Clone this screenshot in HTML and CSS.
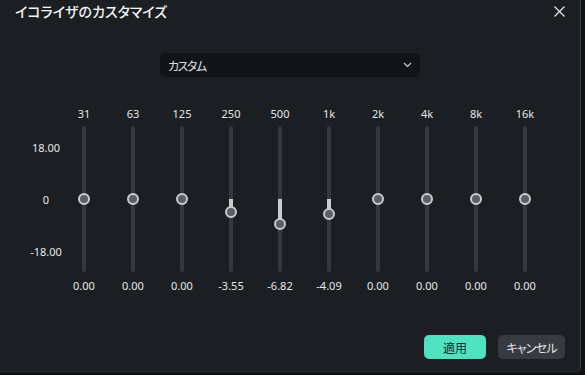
FILE: index.html
```html
<!DOCTYPE html>
<html lang="ja">
  <head>
    <meta charset="UTF-8">
    <meta name="viewport" content="width=device-width, initial-scale=1.0">
    <title>イコライザのカスタマイズ</title>
    <link rel="stylesheet" href="styles.css">
  </head>
  <body>
    <div class="dialog">
      <div class="header">
        <h1 class="title">イコライザのカスタマイズ</h1>
        <button class="close" aria-label="close">
          <svg width="11" height="11" viewBox="0 0 11 11">
            <path d="M0.5 0.5 L10.5 10.5 M10.5 0.5 L0.5 10.5" stroke="#e8eaec" stroke-width="1.2" fill="none"/>
          </svg>
        </button>
      </div>

      <div class="preset">
        <span>カスタム</span>
        <svg width="9" height="6" viewBox="0 0 9 6">
          <path d="M1 1 L4.5 4.5 L8 1" stroke="#c9ccd0" stroke-width="1.2" fill="none"/>
        </svg>
      </div>

      <div class="eq">
        <div class="axis">
          <div class="axis-labels">
            <span>18.00</span>
            <span>0</span>
            <span>-18.00</span>
          </div>
        </div>
        <div class="bands">
          <div class="band"><span class="freq">31</span><div class="track" style="--db:0"><div class="fill"></div><div class="knob"></div></div><span class="value">0.00</span></div>
          <div class="band"><span class="freq">63</span><div class="track" style="--db:0"><div class="fill"></div><div class="knob"></div></div><span class="value">0.00</span></div>
          <div class="band"><span class="freq">125</span><div class="track" style="--db:0"><div class="fill"></div><div class="knob"></div></div><span class="value">0.00</span></div>
          <div class="band"><span class="freq">250</span><div class="track" style="--db:-3.55"><div class="fill"></div><div class="knob"></div></div><span class="value">-3.55</span></div>
          <div class="band"><span class="freq">500</span><div class="track" style="--db:-6.82"><div class="fill"></div><div class="knob"></div></div><span class="value">-6.82</span></div>
          <div class="band"><span class="freq">1k</span><div class="track" style="--db:-4.09"><div class="fill"></div><div class="knob"></div></div><span class="value">-4.09</span></div>
          <div class="band"><span class="freq">2k</span><div class="track" style="--db:0"><div class="fill"></div><div class="knob"></div></div><span class="value">0.00</span></div>
          <div class="band"><span class="freq">4k</span><div class="track" style="--db:0"><div class="fill"></div><div class="knob"></div></div><span class="value">0.00</span></div>
          <div class="band"><span class="freq">8k</span><div class="track" style="--db:0"><div class="fill"></div><div class="knob"></div></div><span class="value">0.00</span></div>
          <div class="band"><span class="freq">16k</span><div class="track" style="--db:0"><div class="fill"></div><div class="knob"></div></div><span class="value">0.00</span></div>
        </div>
      </div>

      <div class="footer">
        <button class="btn apply">適用</button>
        <button class="btn cancel">キャンセル</button>
      </div>
    </div>
  </body>
</html>
```

FILE: styles.css
```css
*{
    margin: 0;
    padding: 0;
    box-sizing: border-box;
}

body{
    background: #0d0f11;
    font-family: "Noto Sans", "Noto Sans CJK JP", sans-serif;
    color: #e6e8ea;
}

.dialog{
    width: 581px;
    height: 373px;
    background: #1b1e22;
    border-right: 1px solid #3a3d42;
    border-bottom-right-radius: 6px;
    display: flex;
    flex-direction: column;
}

.header{
    height: 22px;
    display: flex;
    align-items: center;
    justify-content: space-between;
    padding: 0 15px 0 15px;
}

.title{
    font-family: "Noto Sans CJK JP", sans-serif;
    font-size: 14px;
    font-weight: 500;
    font-feature-settings: "palt";
    color: #f2f3f4;
}

.close{
    border: 0;
    background: none;
    width: 11px;
    height: 11px;
    display: flex;
}

.preset{
    width: 260px;
    height: 24px;
    margin: 31px auto 0;
    background: #121518;
    border-radius: 5px;
    display: flex;
    align-items: center;
    justify-content: space-between;
    padding: 0 8px 0 8px;
    font-family: "Noto Sans CJK JP", sans-serif;
    font-size: 12px;
    font-feature-settings: "palt";
    letter-spacing: -1.5px;
    color: #dfe1e4;
}

.eq{
    display: flex;
    margin-top: 28px;
    padding-left: 32px;
}

.axis{
    width: 28px;
    padding-top: 21px;
}

.axis-labels{
    display: flex;
    flex-direction: column;
    align-items: center;
    gap: 34px;
    padding-top: 13px;
}

.axis-labels span,
.freq,
.value{
    font-size: 11px;
    line-height: 18px;
    height: 18px;
}

.bands{
    display: flex;
    gap: 1px;
}

.band{
    width: 48px;
    display: flex;
    flex-direction: column;
    align-items: center;
}

.track{
    position: relative;
    width: 4px;
    height: 146px;
    margin: 3px 0 5px;
    border-radius: 2px;
    background: #35383d;
}

.fill{
    position: absolute;
    left: 0;
    top: 73px;
    width: 4px;
    height: calc(var(--db) * -3.6px);
    background: #c8cbcf;
}

.knob{
    position: absolute;
    left: -4px;
    top: calc(67px - var(--db) * 3.6px);
    width: 12px;
    height: 12px;
    border-radius: 50%;
    background: #5b5f66;
    border: 2px solid #c8cbcf;
}

.footer{
    margin-top: auto;
    margin-bottom: 14px;
    display: flex;
    justify-content: flex-end;
    gap: 12px;
    padding-right: 15px;
}

.btn{
    height: 24px;
    border: 0;
    border-radius: 5px;
    font-family: "Noto Sans CJK JP", sans-serif;
    font-size: 12px;
    font-feature-settings: "palt";
}

.apply{
    width: 62px;
    background: #50e1c1;
    color: #1b2a28;
}

.cancel{
    width: 67px;
    background: #373b41;
    color: #e2e4e7;
    letter-spacing: -0.8px;
}
```
